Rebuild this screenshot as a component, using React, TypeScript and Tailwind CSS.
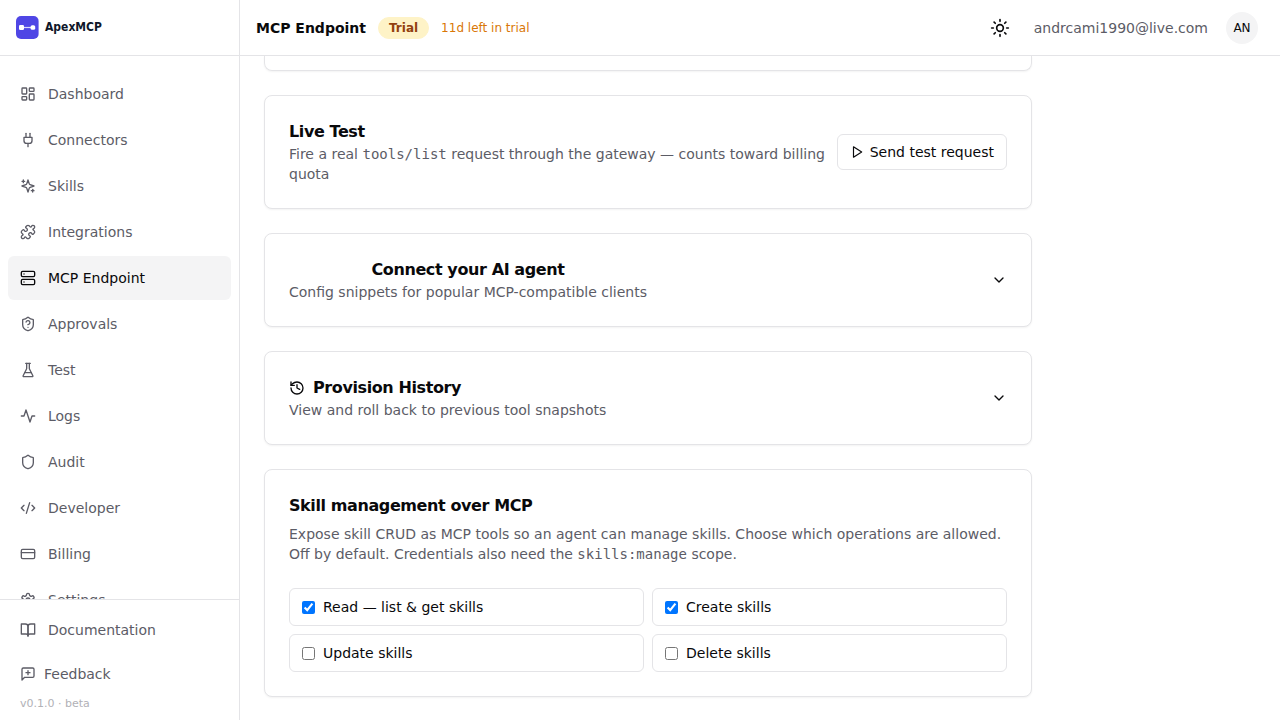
import { useState } from 'react';
import type { ReactNode } from 'react';
import { ChevronDown, CodeXml, CreditCard, History, LayoutDashboard, Server, Shield, Sun } from 'lucide-react';

type IconProps = { className?: string };

const icon = (...paths: string[]) => {
  const Icon = ({ className }: IconProps) => (
    <svg
      className={className}
      viewBox="0 0 24 24"
      fill="none"
      stroke="currentColor"
      strokeWidth={2}
      strokeLinecap="round"
      strokeLinejoin="round"
      aria-hidden="true"
    >
      {paths.map((d) => (
        <path key={d} d={d} />
      ))}
    </svg>
  );
  return Icon;
};

const Plug = icon('M12 22v-5', 'M9 8V2', 'M15 8V2', 'M18 8v5a4 4 0 0 1-4 4h-4a4 4 0 0 1-4-4V8Z');
const Sparkles = icon(
  'm12 3-1.912 5.813a2 2 0 0 1-1.275 1.275L3 12l5.813 1.912a2 2 0 0 1 1.275 1.275L12 21l1.912-5.813a2 2 0 0 1 1.275-1.275L21 12l-5.813-1.912a2 2 0 0 1-1.275-1.275L12 3Z',
  'M5 3v4',
  'M19 17v4',
  'M3 5h4',
  'M17 19h4',
);
const Puzzle = icon(
  'M19.439 7.85c-.049.322.059.648.289.878l1.568 1.568c.47.47.706 1.087.706 1.704s-.235 1.233-.706 1.704l-1.611 1.611a.98.98 0 0 1-.837.276c-.47-.07-.802-.48-.968-.925a2.501 2.501 0 1 0-3.214 3.214c.446.166.855.497.925.968a.979.979 0 0 1-.276.837l-1.61 1.61a2.404 2.404 0 0 1-1.705.707 2.402 2.402 0 0 1-1.704-.706l-1.568-1.568a1.026 1.026 0 0 0-.877-.29c-.493.074-.84.504-1.02.968a2.5 2.5 0 1 1-3.237-3.237c.464-.18.894-.527.967-1.02a1.026 1.026 0 0 0-.289-.877l-1.568-1.568A2.402 2.402 0 0 1 1.998 12c0-.617.236-1.234.706-1.704L4.23 8.77c.24-.24.581-.353.917-.303.515.077.877.528 1.073 1.01a2.5 2.5 0 1 0 3.259-3.259c-.482-.196-.933-.558-1.01-1.073-.05-.336.062-.676.303-.917l1.525-1.525A2.402 2.402 0 0 1 12 1.998c.617 0 1.234.236 1.704.706l1.568 1.568c.23.23.556.338.877.29.493-.074.84-.504 1.02-.968a2.5 2.5 0 1 1 3.237 3.237c-.464.18-.894.527-.967 1.02Z',
);
const ShieldQuestion = icon(
  'M20 13c0 5-3.5 7.5-7.66 8.95a1 1 0 0 1-.67-.01C7.5 20.5 4 18 4 13V6a1 1 0 0 1 1-1c2 0 4.5-1.2 6.24-2.72a1.17 1.17 0 0 1 1.52 0C14.51 3.81 17 5 19 5a1 1 0 0 1 1 1z',
  'M9.1 9a3 3 0 0 1 5.82 1c0 2-3 3-3 3',
  'M12 17h.01',
);
const Flask = icon(
  'M10 2v7.527a2 2 0 0 1-.211.896L4.72 20.55a1 1 0 0 0 .9 1.45h12.76a1 1 0 0 0 .9-1.45l-5.069-10.127A2 2 0 0 1 14 9.527V2',
  'M8.5 2h7',
  'M7 16h10',
);
const Activity = icon('M22 12h-4l-3 9L9 3l-3 9H2');
const Settings = icon(
  'M12.22 2h-.44a2 2 0 0 0-2 2v.18a2 2 0 0 1-1 1.73l-.43.25a2 2 0 0 1-2 0l-.15-.08a2 2 0 0 0-2.73.73l-.22.38a2 2 0 0 0 .73 2.73l.15.1a2 2 0 0 1 1 1.72v.51a2 2 0 0 1-1 1.74l-.15.09a2 2 0 0 0-.73 2.73l.22.38a2 2 0 0 0 2.73.73l.15-.08a2 2 0 0 1 2 0l.43.25a2 2 0 0 1 1 1.73V20a2 2 0 0 0 2 2h.44a2 2 0 0 0 2-2v-.18a2 2 0 0 1 1-1.73l.43-.25a2 2 0 0 1 2 0l.15.08a2 2 0 0 0 2.73-.73l.22-.39a2 2 0 0 0-.73-2.73l-.15-.08a2 2 0 0 1-1-1.74v-.5a2 2 0 0 1 1-1.74l.15-.09a2 2 0 0 0 .73-2.73l-.22-.38a2 2 0 0 0-2.73-.73l-.15.08a2 2 0 0 1-2 0l-.43-.25a2 2 0 0 1-1-1.73V4a2 2 0 0 0-2-2z',
  'M15 12a3 3 0 1 1-6 0 3 3 0 0 1 6 0z',
);
const BookOpen = icon('M2 3h6a4 4 0 0 1 4 4v14a3 3 0 0 0-3-3H2z', 'M22 3h-6a4 4 0 0 0-4 4v14a3 3 0 0 1 3-3h7z');
const MessagePlus = icon('M21 15a2 2 0 0 1-2 2H7l-4 4V5a2 2 0 0 1 2-2h14a2 2 0 0 1 2 2z', 'M12 7v6', 'M9 10h6');
const Play = icon('M6 3 20 12 6 21Z');

const navItems = [
  { label: 'Dashboard', icon: LayoutDashboard },
  { label: 'Connectors', icon: Plug },
  { label: 'Skills', icon: Sparkles },
  { label: 'Integrations', icon: Puzzle },
  { label: 'MCP Endpoint', icon: Server, active: true },
  { label: 'Approvals', icon: ShieldQuestion },
  { label: 'Test', icon: Flask },
  { label: 'Logs', icon: Activity },
  { label: 'Audit', icon: Shield },
  { label: 'Developer', icon: CodeXml },
  { label: 'Billing', icon: CreditCard },
  { label: 'Settings', icon: Settings },
];

const Logo = () => (
  <a href="#" className="flex items-center gap-1.5">
    <svg className="size-[23px]" viewBox="0 0 23 23" fill="none" aria-hidden="true">
      <rect width="22.6" height="23" rx="5" fill="#4f46e5" />
      <path d="M7 11.5h9" stroke="#dcdafa" strokeWidth="1.2" />
      <rect x="3" y="9" width="5" height="5" rx="1.2" fill="#fff" />
      <rect x="14.6" y="9.2" width="4.6" height="4.6" rx="1.6" fill="#fff" />
    </svg>
    <span className="pb-0.5 font-['DejaVu_Sans_Condensed','DejaVu_Sans',sans-serif] text-xs font-bold text-[#0f172a]">
      ApexMCP
    </span>
  </a>
);

const Sidebar = () => (
  <aside className="flex w-60 shrink-0 flex-col border-r border-[#e4e4e7]">
    <div className="flex h-14 shrink-0 items-center border-b border-[#e4e4e7] px-4">
      <Logo />
    </div>
    <nav className="flex min-h-0 flex-1 flex-col gap-0.5 overflow-hidden px-2 pt-4">
      {navItems.map(({ label, icon: Icon, active }) => (
        <a
          key={label}
          href="#"
          aria-current={active ? 'page' : undefined}
          className={
            active
              ? 'flex h-11 shrink-0 items-center gap-3 rounded-md bg-[#f4f4f5] px-3 text-[#09090b]'
              : 'flex h-11 shrink-0 items-center gap-3 rounded-md px-3 text-[#5c5c66]'
          }
        >
          <Icon className="size-4" />
          {label}
        </a>
      ))}
    </nav>
    <div className="border-t border-[#e4e4e7] px-2 py-2 text-[#5c5c66]">
      <a href="#" className="flex h-11 items-center gap-3 rounded-md px-3">
        <BookOpen className="size-4" />
        Documentation
      </a>
      <button type="button" className="flex h-11 w-full items-center gap-2 rounded-md px-3">
        <MessagePlus className="size-4" />
        Feedback
      </button>
      <p className="px-3 text-[11px] leading-4 text-[#b1b1b6]">v0.1.0 · beta</p>
    </div>
  </aside>
);

const Header = () => (
  <header className="flex h-14 shrink-0 items-center justify-between border-b border-[#e4e4e7] px-4">
    <div className="flex items-center gap-3">
      <h1 className="font-semibold">MCP Endpoint</h1>
      <span className="rounded-full border border-[#fef3c7] bg-[#fef3c7] px-2.5 py-0.5 text-xs font-semibold text-[#92400e]">
        Trial
      </span>
      <span className="text-xs text-[#d97706]">11d left in trial</span>
    </div>
    <div className="flex items-center gap-3">
      <button type="button" aria-label="Toggle theme" className="flex size-11 items-center justify-center rounded-md">
        <Sun className="size-5" />
      </button>
      <span className="text-[#5c5c66]">andrcami1990@live.com</span>
      <button type="button" aria-label="Account menu" className="flex size-11 items-center justify-center">
        <span className="flex size-8 items-center justify-center rounded-full bg-[#f4f4f5] text-xs">AN</span>
      </button>
    </div>
  </header>
);

const Card = ({ children }: { children: ReactNode }) => (
  <section className="rounded-lg border border-[#e4e4e7] bg-white p-6 shadow-xs">{children}</section>
);

const CardTitle = ({ children }: { children: ReactNode }) => (
  <h2 className="text-base font-semibold tracking-tight">{children}</h2>
);

const permissions = [
  { id: 'read', label: 'Read — list & get skills' },
  { id: 'create', label: 'Create skills' },
  { id: 'update', label: 'Update skills' },
  { id: 'delete', label: 'Delete skills' },
];

const SkillManagement = () => {
  const [allowed, setAllowed] = useState<string[]>(['read', 'create']);

  const toggle = (id: string) => {
    setAllowed((prev) => (prev.includes(id) ? prev.filter((p) => p !== id) : [...prev, id]));
  };

  return (
    <Card>
      <div className="space-y-1.5">
        <CardTitle>Skill management over MCP</CardTitle>
        <p className="text-[#5c5c66]">
          Expose skill CRUD as MCP tools so an agent can manage skills. Choose which operations are allowed. Off by
          default. Credentials also need the <code className="font-['DejaVu_Sans_Mono',monospace]">skills:manage</code>{' '}
          scope.
        </p>
      </div>
      <div className="mt-6 grid grid-cols-2 gap-2">
        {permissions.map(({ id, label }) => (
          <label key={id} className="flex items-center gap-2 rounded-md border border-[#e4e4e7] px-3 py-2">
            <input type="checkbox" checked={allowed.includes(id)} onChange={() => toggle(id)} />
            {label}
          </label>
        ))}
      </div>
    </Card>
  );
};

const App = () => {
  return (
    <div className="flex h-screen bg-white font-['DejaVu_Sans',sans-serif] text-sm text-[#09090b]">
      <Sidebar />
      <div className="flex min-w-0 flex-1 flex-col">
        <Header />
        <main className="min-h-0 flex-1 overflow-y-auto px-6 pb-5">
          <div className="flex max-w-3xl flex-col gap-6">
            {/* tail of the card scrolled under the header */}
            <div className="h-[15px] rounded-b-lg border border-t-0 border-[#e4e4e7] shadow-xs"></div>

            <Card>
              <div className="flex items-center justify-between gap-2">
                <div>
                  <CardTitle>Live Test</CardTitle>
                  <p className="text-[#5c5c66]">
                    Fire a real <code className="font-['DejaVu_Sans_Mono',monospace]">tools/list</code> request through
                    the gateway — counts toward billing quota
                  </p>
                </div>
                <button
                  type="button"
                  className="flex h-9 shrink-0 items-center gap-1.5 rounded-md border border-[#e4e4e7] px-3"
                >
                  <Play className="size-3.5" />
                  Send test request
                </button>
              </div>
            </Card>

            <Card>
              <button type="button" aria-expanded={false} className="flex w-full items-center justify-between">
                <div>
                  <CardTitle>Connect your AI agent</CardTitle>
                  <p className="text-[#5c5c66]">Config snippets for popular MCP-compatible clients</p>
                </div>
                <ChevronDown className="size-4" />
              </button>
            </Card>

            <Card>
              <button type="button" aria-expanded={false} className="flex w-full items-center justify-between">
                <div>
                  <CardTitle>
                    <span className="flex items-center gap-2">
                      <History className="size-4" />
                      Provision History
                    </span>
                  </CardTitle>
                  <p className="text-[#5c5c66]">View and roll back to previous tool snapshots</p>
                </div>
                <ChevronDown className="size-4" />
              </button>
            </Card>

            <SkillManagement />
          </div>
        </main>
      </div>
    </div>
  );
};

export default App;
